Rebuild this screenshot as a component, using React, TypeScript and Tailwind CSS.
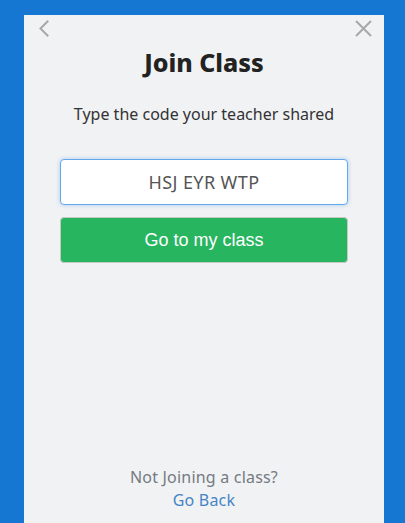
export default function App() {
  return (
    <div className="h-[523px] w-[405px] bg-[#1677d2] pt-[15px] px-[24px] font-['Noto_Sans',sans-serif]">
      <div className="h-[508px] w-[360px] bg-[#f1f2f4] flex flex-col">
        {/* top bar */}
        <div className="flex justify-between pl-[14px] pr-[12px] pt-[5px] h-[26px]">
          <svg width="12" height="17" viewBox="0 0 12 17" fill="none" stroke="#a8a8a8" strokeWidth="2" strokeLinecap="square">
            <path d="M9.5 1.5 L2.5 8.5 L9.5 15.5" />
          </svg>
          <svg width="17" height="17" viewBox="0 0 17 17" fill="none" stroke="#a8a8a8" strokeWidth="2">
            <path d="M1 1 L16 16 M16 1 L1 16" />
          </svg>
        </div>

        <h1 className="text-center text-[25px] font-extrabold text-[#222] mt-[5px] leading-[32px]">
          Join Class
        </h1>
        <p className="text-center text-[16px] text-[#333] mt-[25px] leading-[22px]">
          Type the code your teacher shared
        </p>

        <div className="px-[36px] mt-[34px] flex flex-col gap-[12px]">
          <div className="h-[46px] bg-white border border-[#64a8ec] rounded-[4px] shadow-[0_0_4px_rgba(100,168,236,0.5)] flex items-center justify-center text-[18px] text-[#555] tracking-[0.4px]">
            HSJ EYR WTP
          </div>
          <button className="h-[46px] bg-[#27b560] border border-[#c6c6c6] rounded-[4px] text-white text-[18px] font-['Liberation_Sans',sans-serif]">
            Go to my class
          </button>
        </div>

        <div className="mt-auto mb-[11px] text-center text-[16px] leading-[23px] tracking-[0.2px]">
          <p className="text-[#757a82]">Not Joining a class?</p>
          <p className="text-[#4585c6]">Go Back</p>
        </div>
      </div>
    </div>
  );
}
